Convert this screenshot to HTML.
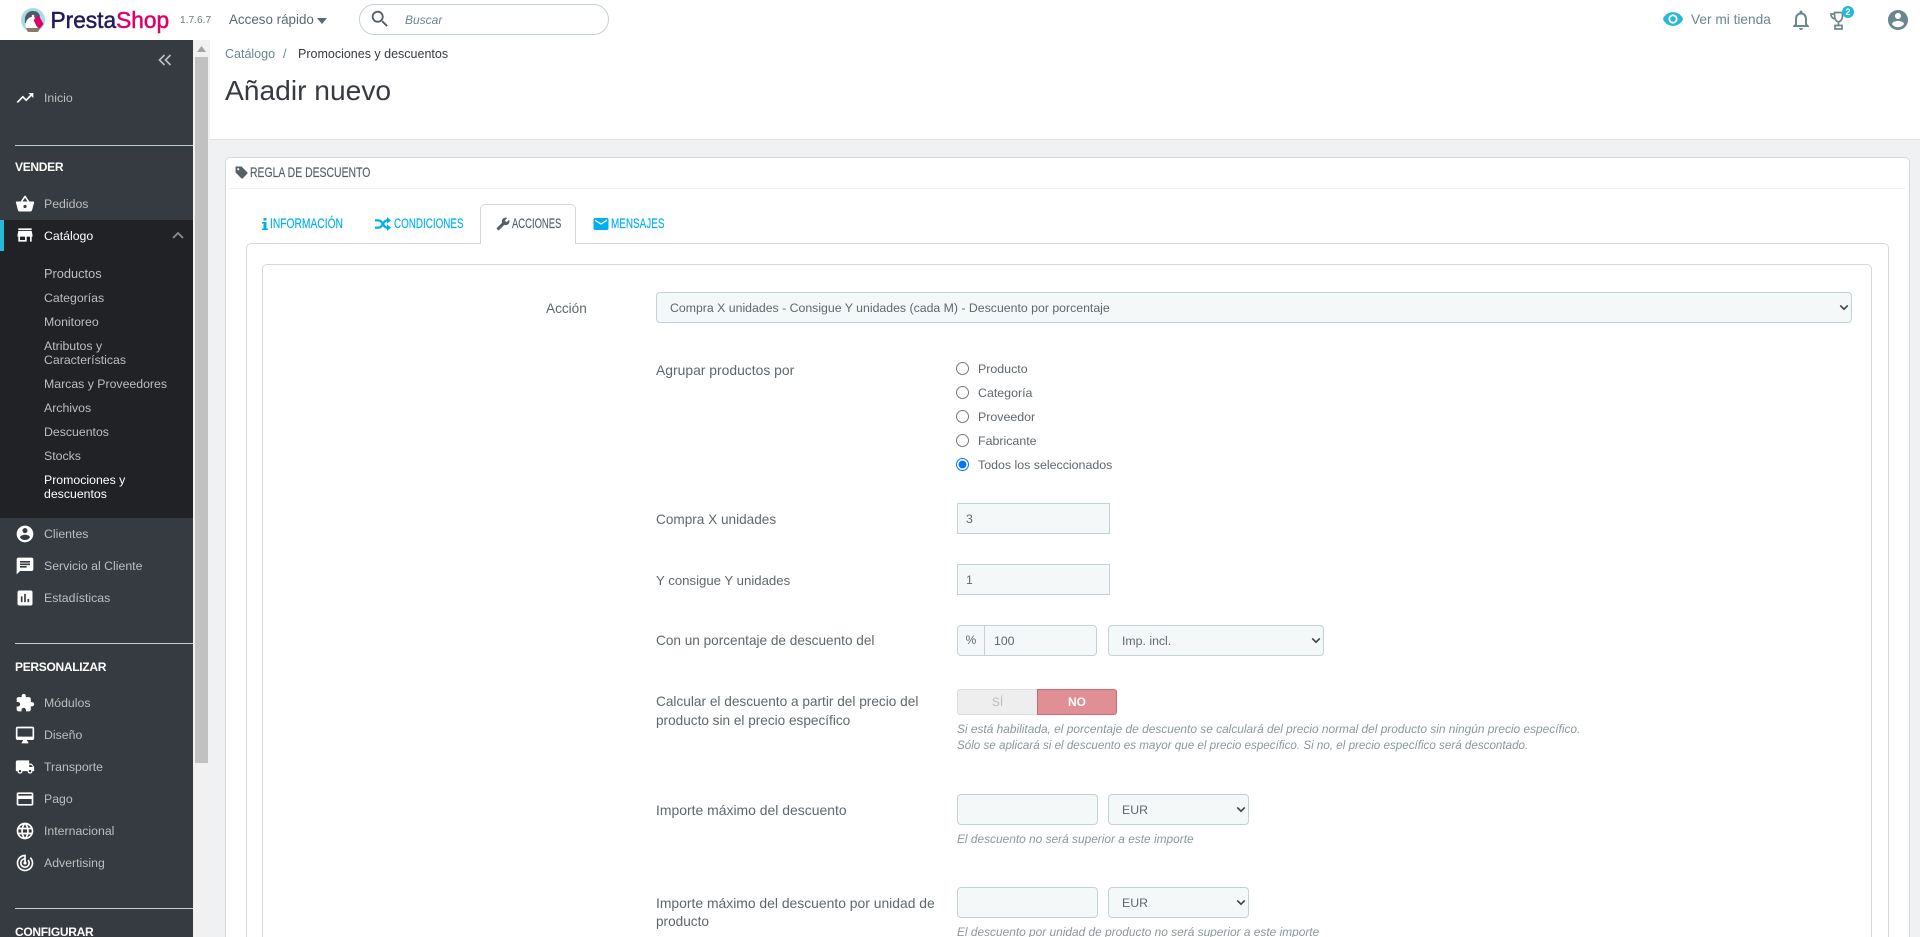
<!DOCTYPE html>
<html lang="es"><head><meta charset="utf-8"><title>Añadir nuevo</title>
<style>
html,body{margin:0;padding:0;width:1920px;height:937px;overflow:hidden;background:#eff1f2;font-family:"Liberation Sans",Arial,sans-serif;color:#555f65}
*{box-sizing:border-box}
#w{position:relative;width:1920px;height:937px;overflow:hidden;background:#eff1f2}
.a{position:absolute}
.t{position:absolute;white-space:nowrap;line-height:16px;height:16px}
.s{font-size:12.3px;color:#bebebe;left:44px}
.h{font-size:12px;font-weight:bold;color:#fff;left:15px;letter-spacing:-.3px}
.l{position:absolute;left:15px;width:178px;height:1px;background:#bbcdd2}
.ic{position:absolute;left:15px;width:20px;height:20px;fill:#fff}
.f{font-size:13.6px;left:656px;color:#5f686d}
.r{font-size:12.4px;left:978px;color:#5f686d}
.i{position:absolute;background:#f5f8f9;border:1px solid #c3d2d6;border-radius:4px;margin:0;padding:0;font:12.3px "Liberation Sans",Arial,sans-serif;color:#5f686d}
select.i{appearance:none;-webkit-appearance:none;padding:1px 0 0 13px;outline:0}
input.i{padding-left:9px;outline:0}
.car{position:absolute;width:10px;height:7px;fill:none;stroke:#444;stroke-width:2}
.help{font-size:11.9px;font-style:italic;color:#8a989d;left:957px}
.rd{position:absolute;left:956px;width:13px;height:13px;margin:0}
.cond{display:inline-block;transform:scaleX(.75);transform-origin:0 50%;font-size:13.5px;-webkit-text-stroke:.15px}
.tab{top:216px}
</style></head><body><div id="w">

<!-- top bar -->
<div class="a" style="left:0;top:0;width:1920px;height:40px;background:#fff"></div>
<svg class="a" style="left:21px;top:8px;width:24px;height:24px" viewBox="0 0 24 24">
<circle cx="12" cy="12" r="12" fill="#a5dbe8"/>
<path d="M4 15C3 8 6 3 12 3c4 0 6 2 7 5l-2 5-4 3z" fill="#4c5a63"/>
<path d="M5 20c-1-4 0-8 3-10 3-2 6-1 7 1l2 5-2 5c-3 2-7 1-10-1z" fill="#fff"/>
<circle cx="12" cy="8" r="1.300" fill="#fff"/>
<path d="M12.500 12l5-5 5 9-4 5-3-3z" fill="#df0067"/>
<path d="M5 20h14l-1.500 3.500a12 12 0 0 1-11 0z" fill="#8a7a68"/>
</svg>
<div class="t" style="left:50.500px;top:6px;height:28px;line-height:28px;font-size:22.700px;-webkit-text-stroke:.5px;color:#251b5b">Presta<span style="color:#df0067">Shop</span></div>
<div class="t" style="left:180px;top:13px;font-size:10.2px;color:#6c7a80">1.7.6.7</div>
<div class="t" style="left:229px;top:12px;font-size:13.4px;color:#5a6a71">Acceso rápido</div>
<svg class="a" style="left:317px;top:18px;width:10px;height:6px" viewBox="0 0 10 6"><path d="M0 0h10L5 6z" fill="#5a6a71"/></svg>
<div class="a" style="left:359px;top:4px;width:250px;height:31px;border:1px solid #c3d2d6;border-radius:16px;background:#fff"></div>
<svg class="a" style="left:369px;top:8px;width:22px;height:22px;fill:#555f65" viewBox="0 0 24 24"><path d="M15.5 14h-.79l-.28-.27C15.41 12.59 16 11.11 16 9.5 16 5.91 13.09 3 9.5 3S3 5.91 3 9.5 5.91 16 9.5 16c1.61 0 3.09-.59 4.23-1.57l.27.28v.79l5 4.99L20.49 19l-4.99-5zm-6 0C7.01 14 5 11.99 5 9.5S7.01 5 9.5 5 14 7.01 14 9.5 11.99 14 9.5 14z"/></svg>
<div class="t" style="left:405px;top:12px;font-size:12px;font-style:italic;color:#6c868e">Buscar</div>

<svg class="a" style="left:1662px;top:8px;width:22px;height:22px;fill:#25b9d7" viewBox="0 0 24 24"><path d="M12 4.5C7 4.5 2.73 7.61 1 12c1.73 4.39 6 7.5 11 7.5s9.27-3.11 11-7.5c-1.73-4.39-6-7.5-11-7.5zM12 17c-2.76 0-5-2.24-5-5s2.24-5 5-5 5 2.24 5 5-2.24 5-5 5zm0-8c-1.66 0-3 1.34-3 3s1.34 3 3 3 3-1.34 3-3-1.34-3-3-3z"/></svg>
<div class="t" style="left:1691px;top:12px;font-size:13.7px;color:#6c868e">Ver mi tienda</div>
<svg class="a" style="left:1789px;top:8px;width:24px;height:24px;fill:#6c868e" viewBox="0 0 24 24"><path d="M12 22c1.1 0 2-.9 2-2h-4c0 1.1.9 2 2 2zm6-6v-5c0-3.07-1.63-5.64-4.5-6.32V4c0-.83-.67-1.5-1.5-1.5s-1.5.67-1.5 1.5v.68C7.64 5.36 6 7.92 6 11v5l-2 2v1h16v-1l-2-2zm-2 1H8v-6c0-2.48 1.51-4.5 4-4.5s4 2.02 4 4.5v6z"/></svg>
<svg class="a" style="left:1830px;top:11px;width:18px;height:19px;fill:none;stroke:#6c868e;stroke-width:1.7" viewBox="0 0 18 19"><path d="M4.5 1.5h8c0 5 0 8-4 9.5-4-1.500-4-4.500-4-9.500zM4.500 3H1c0 3 1.500 4.500 4 5M8.500 11v3M5 14.500h7V18H5z"/></svg>
<div class="a" style="left:1842px;top:6px;width:12px;height:12px;border-radius:50%;background:#25b9d7;color:#fff;font-size:9px;font-weight:bold;line-height:12px;text-align:center">2</div>
<svg class="a" style="left:1886px;top:8px;width:24px;height:24px;fill:#6c868e" viewBox="0 0 24 24"><path d="M12 2C6.480 2 2 6.480 2 12s4.480 10 10 10 10-4.480 10-10S17.520 2 12 2zm0 3c1.660 0 3 1.340 3 3s-1.340 3-3 3-3-1.340-3-3 1.340-3 3-3zm0 14.200c-2.500 0-4.710-1.280-6-3.220.03-1.990 4-3.080 6-3.080 1.990 0 5.970 1.090 6 3.080-1.290 1.940-3.500 3.220-6 3.220z"/></svg>

<!-- sidebar -->
<div class="a" style="left:0;top:40px;width:193px;height:897px;background:#363a41"></div>
<div class="a" style="left:0;top:220px;width:193px;height:298px;background:#202226"></div>
<div class="a" style="left:0;top:220px;width:4px;height:31px;background:#25b9d7"></div>
<svg class="a" style="left:158px;top:54px;width:14px;height:12px;fill:none;stroke:#bebebe;stroke-width:1.700" viewBox="0 0 14 12"><path d="M6.500 1L1.500 6l5 5M12.500 1l-5 5 5 5"/></svg>

<svg class="ic" style="top:88px" viewBox="0 0 24 24"><path d="M16 6l2.290 2.290-4.880 4.880-4-4L2 16.590 3.410 18l6-6 4 4 6.300-6.290L22 12V6z"/></svg>
<div class="t s" style="top:90px">Inicio</div>
<div class="l" style="top:145px"></div>
<div class="t h" style="top:159px">VENDER</div>
<svg class="ic" style="top:194px" viewBox="0 0 24 24"><path d="M17.210 9l-4.380-6.560c-.19-.28-.51-.42-.83-.42-.32 0-.64.14-.83.43L6.790 9H2c-.55 0-1 .45-1 1 0 .09.01.18.04.27l2.540 9.270c.23.84 1 1.460 1.920 1.460h13c.92 0 1.690-.62 1.930-1.460l2.540-9.270L23 10c0-.55-.45-1-1-1h-4.790zM9 9l3-4.400L15 9H9zm3 8c-1.100 0-2-.9-2-2s.9-2 2-2 2 .9 2 2-.9 2-2 2z"/></svg>
<div class="t s" style="top:196px">Pedidos</div>
<svg class="ic" style="top:225px" viewBox="0 0 24 24"><path d="M20 4H4v2h16V4zm1 10v-2l-1-5H4l-1 5v2h1v6h10v-6h4v6h2v-6h1zm-9 4H6v-4h6v4z"/></svg>
<div class="t s" style="top:228px;color:#fff">Catálogo</div>
<svg class="a" style="left:172px;top:231px;width:12px;height:8px;fill:none;stroke:#8a8f96;stroke-width:1.800" viewBox="0 0 12 8"><path d="M1 7l5-5 5 5"/></svg>

<div class="t s" style="top:266px;font-size:12.8px">Productos</div>
<div class="t s" style="top:290px">Categorías</div>
<div class="t s" style="top:314px">Monitoreo</div>
<div class="t s" style="top:338px">Atributos y</div>
<div class="t s" style="top:352px">Características</div>
<div class="t s" style="top:376px">Marcas y Proveedores</div>
<div class="t s" style="top:400px">Archivos</div>
<div class="t s" style="top:424px">Descuentos</div>
<div class="t s" style="top:448px">Stocks</div>
<div class="t s" style="top:472px;color:#fff">Promociones y</div>
<div class="t s" style="top:486px;color:#fff">descuentos</div>

<svg class="ic" style="top:524px" viewBox="0 0 24 24"><path d="M12 2C6.480 2 2 6.480 2 12s4.480 10 10 10 10-4.480 10-10S17.520 2 12 2zm0 3c1.660 0 3 1.340 3 3s-1.340 3-3 3-3-1.340-3-3 1.340-3 3-3zm0 14.200c-2.500 0-4.710-1.280-6-3.220.03-1.990 4-3.080 6-3.080 1.990 0 5.970 1.090 6 3.080-1.290 1.940-3.500 3.220-6 3.220z"/></svg>
<div class="t s" style="top:526px">Clientes</div>
<svg class="ic" style="top:556px" viewBox="0 0 24 24"><path d="M20 2H4c-1.100 0-1.990.9-1.990 2L2 22l4-4h14c1.100 0 2-.9 2-2V4c0-1.100-.9-2-2-2zM6 9h12v2H6V9zm8 5H6v-2h8v2zm4-6H6V6h12v2z"/></svg>
<div class="t s" style="top:558px">Servicio al Cliente</div>
<svg class="ic" style="top:588px" viewBox="0 0 24 24"><path d="M19 3H5c-1.100 0-2 .9-2 2v14c0 1.100.9 2 2 2h14c1.100 0 2-.9 2-2V5c0-1.100-.9-2-2-2zM9 17H7v-7h2v7zm4 0h-2V7h2v10zm4 0h-2v-4h2v4z"/></svg>
<div class="t s" style="top:590px">Estadísticas</div>
<div class="l" style="top:643px"></div>
<div class="t h" style="top:659px">PERSONALIZAR</div>
<svg class="ic" style="top:693px" viewBox="0 0 24 24"><path d="M20.500 11H19V7c0-1.100-.9-2-2-2h-4V3.500C13 2.120 11.880 1 10.500 1S8 2.120 8 3.500V5H4c-1.100 0-1.990.9-1.990 2v3.800H3.500c1.490 0 2.700 1.210 2.700 2.700s-1.210 2.700-2.700 2.700H2V20c0 1.100.9 2 2 2h3.800v-1.500c0-1.490 1.210-2.700 2.700-2.700 1.490 0 2.700 1.210 2.700 2.700V22H17c1.100 0 2-.9 2-2v-4h1.500c1.380 0 2.500-1.120 2.500-2.500S21.880 11 20.500 11z"/></svg>
<div class="t s" style="top:695px">Módulos</div>
<svg class="ic" style="top:725px" viewBox="0 0 24 24"><path d="M21 2H3c-1.100 0-2 .9-2 2v12c0 1.100.9 2 2 2h7l-2 3v1h8v-1l-2-3h7c1.100 0 2-.9 2-2V4c0-1.100-.9-2-2-2zm0 12H3V4h18v10z"/></svg>
<div class="t s" style="top:727px">Diseño</div>
<svg class="ic" style="top:757px" viewBox="0 0 24 24"><path d="M20 8h-3V4H3c-1.100 0-2 .9-2 2v11h2c0 1.660 1.340 3 3 3s3-1.340 3-3h6c0 1.660 1.340 3 3 3s3-1.340 3-3h2v-5l-3-4zM6 18.500c-.83 0-1.500-.67-1.500-1.500s.67-1.500 1.500-1.500 1.500.67 1.500 1.500-.67 1.500-1.500 1.500zm13.500-9l1.960 2.500H17V9.500h2.500zm-1.500 9c-.83 0-1.500-.67-1.500-1.500s.67-1.500 1.500-1.500 1.500.67 1.500 1.500-.67 1.500-1.500 1.500z"/></svg>
<div class="t s" style="top:759px">Transporte</div>
<svg class="ic" style="top:789px" viewBox="0 0 24 24"><path d="M20 4H4c-1.110 0-1.990.89-1.990 2L2 18c0 1.110.89 2 2 2h16c1.110 0 2-.89 2-2V6c0-1.110-.89-2-2-2zm0 14H4v-6h16v6zm0-10H4V6h16v2z"/></svg>
<div class="t s" style="top:791px">Pago</div>
<svg class="ic" style="top:821px" viewBox="0 0 24 24"><path d="M11.990 2C6.470 2 2 6.480 2 12s4.470 10 9.990 10C17.520 22 22 17.520 22 12S17.520 2 11.990 2zm6.930 6h-2.950c-.32-1.250-.78-2.450-1.380-3.560 1.840.63 3.370 1.910 4.330 3.560zM12 4.040c.83 1.200 1.480 2.530 1.910 3.960h-3.820c.43-1.430 1.080-2.760 1.910-3.960zM4.260 14C4.100 13.360 4 12.690 4 12s.1-1.360.26-2h3.380c-.08.66-.14 1.320-.14 2 0 .68.06 1.340.14 2H4.260zm.82 2h2.950c.32 1.250.78 2.450 1.380 3.560-1.840-.63-3.370-1.900-4.330-3.560zm2.950-8H5.080c.96-1.660 2.490-2.930 4.330-3.560C8.810 5.550 8.350 6.750 8.030 8zM12 19.960c-.83-1.200-1.480-2.530-1.910-3.960h3.820c-.43 1.430-1.080 2.760-1.910 3.960zM14.340 14H9.660c-.09-.66-.16-1.320-.16-2 0-.68.07-1.350.16-2h4.680c.09.65.16 1.320.16 2 0 .68-.07 1.340-.16 2zm.25 5.560c.6-1.110 1.060-2.310 1.380-3.560h2.950c-.96 1.650-2.490 2.930-4.330 3.560zM16.360 14c.08-.66.14-1.320.14-2 0-.68-.06-1.340-.14-2h3.380c.16.64.26 1.310.26 2s-.1 1.360-.26 2h-3.380z"/></svg>
<div class="t s" style="top:823px">Internacional</div>
<svg class="ic" style="top:853px" viewBox="0 0 24 24"><path d="M19.070 4.930l-1.410 1.410C19.100 7.790 20 9.790 20 12c0 4.420-3.580 8-8 8s-8-3.580-8-8c0-4.080 3.050-7.440 7-7.930v2.020C8.160 6.570 6 9.030 6 12c0 3.310 2.690 6 6 6s6-2.690 6-6c0-1.660-.67-3.160-1.760-4.240l-1.410 1.410C15.550 9.900 16 10.900 16 12c0 2.210-1.790 4-4 4s-4-1.790-4-4c0-1.860 1.280-3.410 3-3.860v2.140c-.6.35-1 .98-1 1.720 0 1.100.9 2 2 2s2-.9 2-2c0-.74-.4-1.380-1-1.720V2h-1C6.480 2 2 6.480 2 12s4.480 10 10 10 10-4.480 10-10c0-2.760-1.120-5.260-2.930-7.070z"/></svg>
<div class="t s" style="top:855px">Advertising</div>
<div class="l" style="top:908px"></div>
<div class="t h" style="top:924px">CONFIGURAR</div>

<!-- sidebar scrollbar -->
<div class="a" style="left:193px;top:40px;width:17px;height:897px;background:#f1f1f1"></div>
<div class="a" style="left:195px;top:57px;width:13px;height:706px;background:#c1c1c1"></div>
<svg class="a" style="left:197px;top:46px;width:9px;height:6px" viewBox="0 0 9 6"><path d="M4.500 0L9 6H0z" fill="#a3a3a3"/></svg>

<!-- page header -->
<div class="a" style="left:210px;top:40px;width:1710px;height:100px;background:#fff;border-bottom:1px solid #dfe3e5"></div>
<div class="t" style="left:225px;top:46px;font-size:12.5px;color:#6c868e">Catálogo</div>
<div class="t" style="left:283px;top:46px;font-size:12.5px;color:#6c868e">/</div>
<div class="t" style="left:298px;top:46px;font-size:12.5px;color:#363a41">Promociones y descuentos</div>
<div class="t" style="left:225px;top:72px;height:36px;line-height:36px;font-size:28.2px;color:#363a41">Añadir nuevo</div>

<!-- card -->
<div class="a" style="left:225px;top:157px;width:1685px;height:800px;background:#fff;border:1.500px solid #d3d8db;border-radius:5px"></div>
<div class="a" style="left:230px;top:188px;width:1675px;height:1px;background:#eceeef"></div>
<svg class="a" style="left:235px;top:166px;width:13px;height:13px;fill:#555f65" viewBox="0 0 24 24"><path fill-rule="evenodd" d="M1 1h10c.8 0 1.500.3 2 .9l9.600 9.600c.8.8.8 2.100 0 2.900l-8.200 8.200c-.8.8-2.100.8-2.900 0L1.900 13C1.300 12.500 1 11.800 1 11zM6 4a2 2 0 1 0 0 4 2 2 0 0 0 0-4z"/></svg>
<div class="t" style="left:250px;top:164px"><span class="cond" style="font-size:14px;color:#555f65;transform:scaleX(.745)">REGLA DE DESCUENTO</span></div>

<!-- tab panel -->
<div class="a" style="left:246px;top:243px;width:1643px;height:720px;background:#fff;border:1px solid #d3d8db;border-radius:5px"></div>
<div class="a" style="left:480px;top:204px;width:96px;height:40px;background:#fff;border:1px solid #d3d8db;border-bottom:0;border-radius:5px 5px 0 0"></div>
<svg class="a" style="left:262px;top:218px;width:6px;height:12px;fill:#00aff0" viewBox="0 0 6 12"><path d="M1.500 0h3v2.500h-3zM0 4h4.500v6.500H6V12H0v-1.500h1.500V5.500H0z"/></svg>
<div class="t tab" style="left:270px;color:#00aff0"><span class="cond" style="transform:scaleX(.76)">INFORMACIÓN</span></div>
<svg class="a" style="left:375px;top:217px;width:16px;height:14px" viewBox="0 0 24 21"><path d="M0 5h5c7 0 7 11 13 11h2M0 16h5c7 0 7-11 13-11h2" fill="none" stroke="#00aff0" stroke-width="3.400"/><path d="M18 0l6 5-6 5zM18 11l6 5-6 5z" fill="#00aff0"/></svg>
<div class="t tab" style="left:394px;color:#00aff0"><span class="cond" style="transform:scaleX(.73)">CONDICIONES</span></div>
<svg class="a" style="left:496px;top:217px;width:14px;height:14px;fill:#555f65;transform:scaleX(-1)" viewBox="0 0 24 24"><path d="M22.700 19l-9.100-9.100c.9-2.300.4-5-1.500-6.900-2-2-5-2.400-7.400-1.300L9 6 6 9 1.600 4.700C.4 7.100.9 10.100 2.900 12.100c1.900 1.900 4.600 2.400 6.900 1.500l9.100 9.100c.4.400 1 .4 1.400 0l2.300-2.300c.5-.4.5-1.100.1-1.400z"/></svg>
<div class="t tab" style="left:512px;color:#555f65"><span class="cond" style="transform:scaleX(.7)">ACCIONES</span></div>
<svg class="a" style="left:592px;top:215px;width:18px;height:18px;fill:#00aff0" viewBox="0 0 24 24"><path d="M20 4H4c-1.100 0-1.990.9-1.990 2L2 18c0 1.110.9 2 2 2h16c1.100 0 2-.9 2-2V6c0-1.100-.9-2-2-2zm0 4l-8 5-8-5V6l8 5 8-5v2z"/></svg>
<div class="t tab" style="left:611px;color:#00aff0"><span class="cond" style="transform:scaleX(.735)">MENSAJES</span></div>

<!-- form panel -->
<div class="a" style="left:262px;top:264px;width:1610px;height:700px;background:#fff;border:1px solid #d3d8db;border-radius:5px"></div>

<div class="t f" style="left:546px;top:301px">Acción</div>
<select class="i" style="left:656px;top:292px;width:1196px;height:31px"><option>Compra X unidades - Consigue Y unidades (cada M) - Descuento por porcentaje</option></select>
<svg class="car" style="left:1839px;top:304px" viewBox="0 0 12 8"><path d="M1.500 1.500L6 6l4.500-4.500"/></svg>

<div class="t f" style="top:362px;font-size:13.9px">Agrupar productos por</div>
<input type="radio" class="rd" style="top:362px" name="g"><div class="t r" style="top:361px">Producto</div>
<input type="radio" class="rd" style="top:386px" name="g"><div class="t r" style="top:385px">Categoría</div>
<input type="radio" class="rd" style="top:410px" name="g"><div class="t r" style="top:409px">Proveedor</div>
<input type="radio" class="rd" style="top:434px" name="g"><div class="t r" style="top:433px">Fabricante</div>
<input type="radio" class="rd" style="top:458px" name="g" checked><div class="t r" style="top:457px">Todos los seleccionados</div>

<div class="t f" style="top:512px">Compra X unidades</div>
<input class="i" style="left:957px;top:503px;width:153px;height:31px;border-radius:0;padding-left:8px" value="3">
<div class="t f" style="top:573px;font-size:13.2px">Y consigue Y unidades</div>
<input class="i" style="left:957px;top:564px;width:153px;height:31px;border-radius:0;padding-left:8px" value="1">

<div class="t f" style="top:633px">Con un porcentaje de descuento del</div>
<div class="i" style="left:957px;top:625px;width:28px;height:31px;border-radius:4px 0 0 4px;text-align:center;line-height:28px;font-size:12px">%</div>
<input class="i" style="left:984px;top:625px;width:113px;height:31px;border-radius:0 4px 4px 0;padding-left:9px" value="100">
<select class="i" style="left:1108px;top:625px;width:216px;height:31px"><option>Imp. incl.</option></select>
<svg class="car" style="left:1311px;top:637px" viewBox="0 0 12 8"><path d="M1.500 1.500L6 6l4.500-4.500"/></svg>

<div class="t f" style="top:694px;font-size:13.65px">Calcular el descuento a partir del precio del</div>
<div class="t f" style="top:713px">producto sin el precio específico</div>
<div class="a" style="left:957px;top:689px;width:81px;height:26px;background:#eee;border:1px solid #dcdcdc;border-radius:3px 0 0 3px;text-align:center;line-height:24px;font-size:12px;color:#bbb">SÍ</div>
<div class="a" style="left:1037px;top:689px;width:80px;height:26px;background:#e08f95;border:1px solid #cd6a70;border-radius:0 3px 3px 0;text-align:center;line-height:24px;font-size:12px;font-weight:bold;color:#fff">NO</div>
<div class="t help" style="top:721px">Si está habilitada, el porcentaje de descuento se calculará del precio normal del producto sin ningún precio específico.</div>
<div class="t help" style="top:738px;font-size:11.63px">Sólo se aplicará si el descuento es mayor que el precio específico. Si no, el precio específico será descontado.</div>

<div class="t f" style="top:802px;font-size:13.95px">Importe máximo del descuento</div>
<input class="i" style="left:957px;top:794px;width:141px;height:31px">
<select class="i" style="left:1108px;top:794px;width:141px;height:31px"><option>EUR</option></select>
<svg class="car" style="left:1236px;top:806px" viewBox="0 0 12 8"><path d="M1.500 1.500L6 6l4.500-4.500"/></svg>
<div class="t help" style="top:831px">El descuento no será superior a este importe</div>

<div class="t f" style="top:895px;font-size:13.9px">Importe máximo del descuento por unidad de</div>
<div class="t f" style="top:914px">producto</div>
<input class="i" style="left:957px;top:887px;width:141px;height:31px">
<select class="i" style="left:1108px;top:887px;width:141px;height:31px"><option>EUR</option></select>
<svg class="car" style="left:1236px;top:899px" viewBox="0 0 12 8"><path d="M1.500 1.500L6 6l4.500-4.500"/></svg>
<div class="t help" style="top:924px">El descuento por unidad de producto no será superior a este importe</div>

</div></body></html>
